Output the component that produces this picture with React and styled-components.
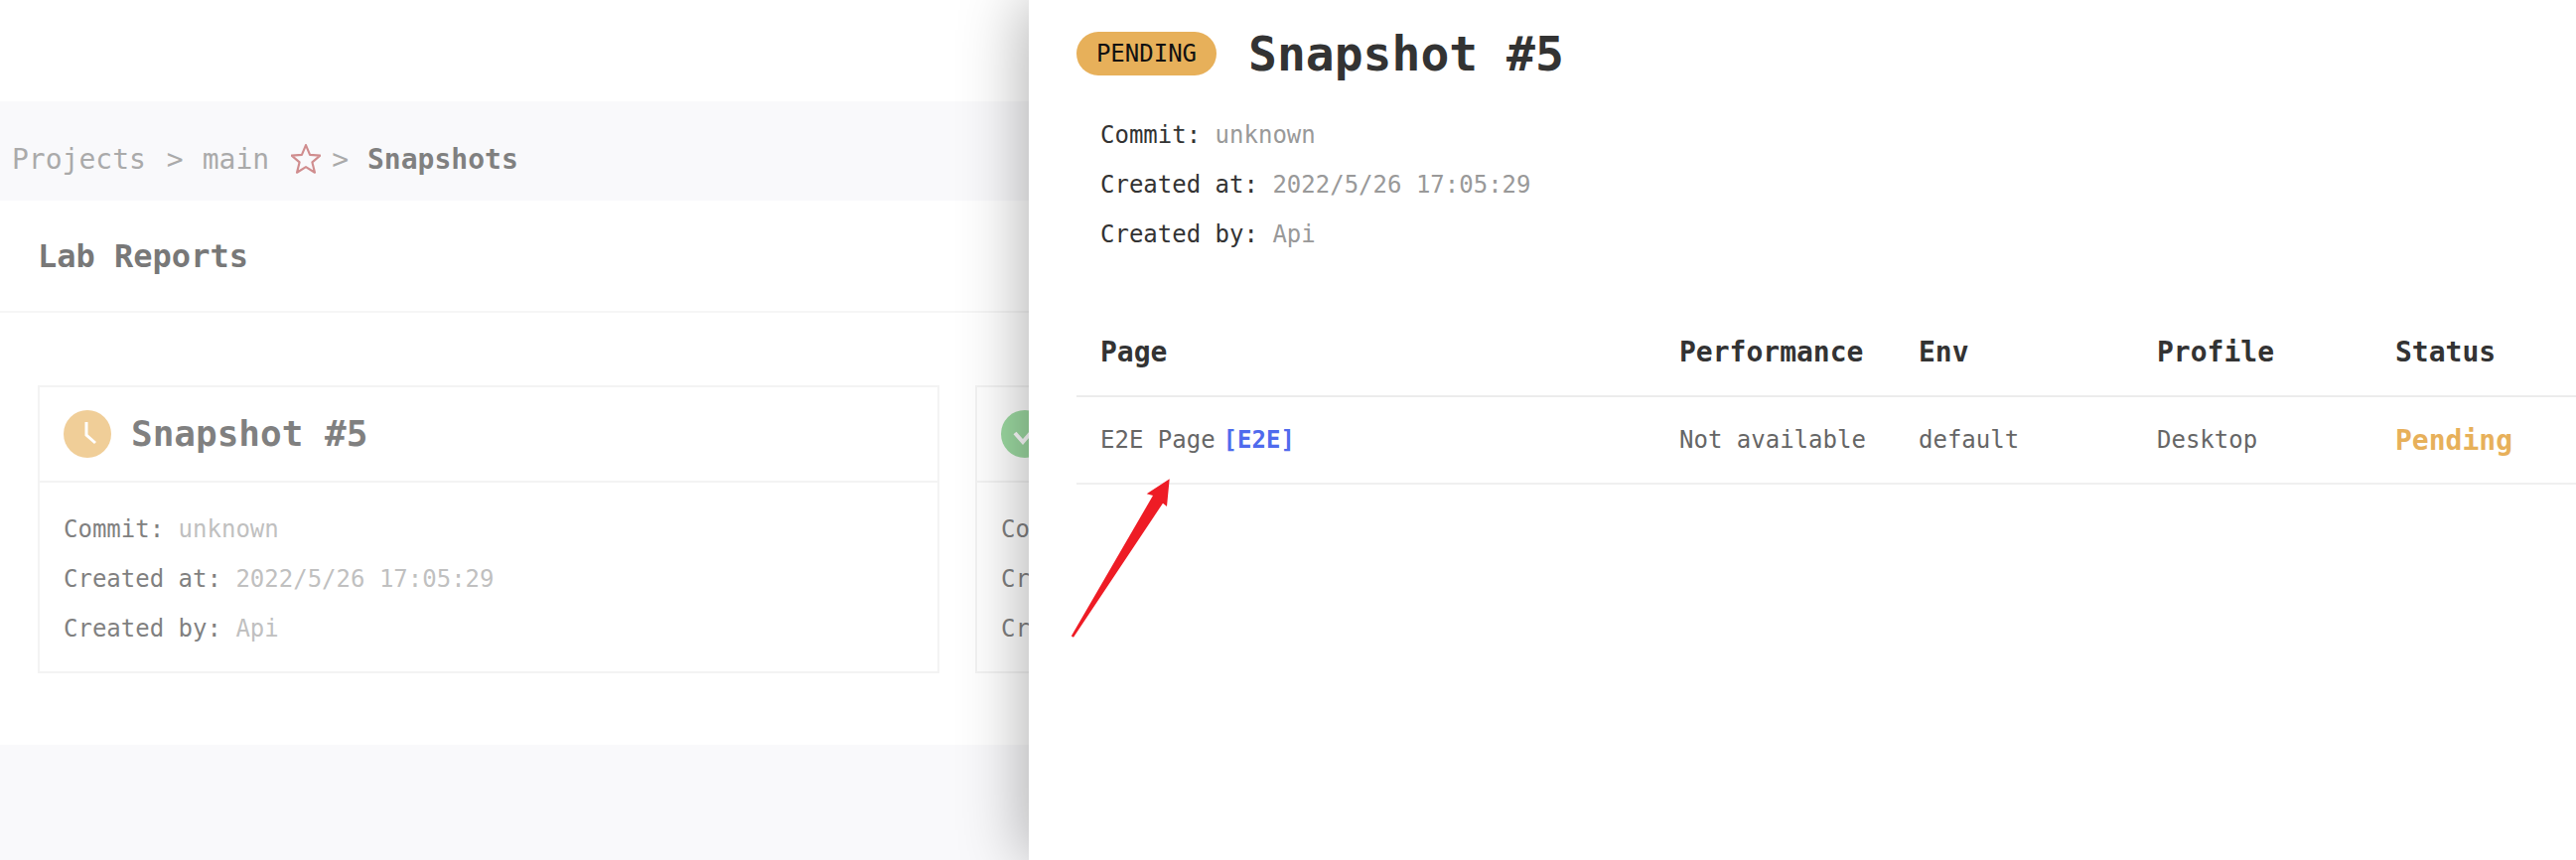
import React from 'react';
import styled, {createGlobalStyle} from 'styled-components';

const GlobalStyle = createGlobalStyle`
    html, body {
        margin: 0;
        padding: 0;
        background: #fff;
    }
    body {
        font-family: 'DejaVu Sans Mono', 'Liberation Mono', monospace;
        color: #333;
    }
`;

const snapshotMeta = [
    {label: 'Commit:', value: 'unknown'},
    {label: 'Created at:', value: '2022/5/26 17:05:29'},
    {label: 'Created by:', value: 'Api'},
];

const columns = '583px 241px 240px 240px 1fr';

function MetaLines({items}) {
    return (
        <div>
            {items.map((item) => (
                <MetaLine key={item.label}>
                    {item.label} <MetaValue>{item.value}</MetaValue>
                </MetaLine>
            ))}
        </div>
    );
}

function App() {
    return (
        <Page>
            <GlobalStyle />

            <TopBar />
            <Breadcrumb>
                <Crumb>Projects</Crumb>
                <Separator>&gt;</Separator>
                <Crumb>main</Crumb>
                <StarIcon viewBox="1 1 28 28">
                    <path
                        d="M15 2 L18.8 11.2 L28.4 11.9 L21 18.2 L23.4 27.8 L15 22.6 L6.6 27.8 L9 18.2 L1.6 11.9 L11.2 11.2 Z"
                        fill="none"
                        stroke="#b3484a"
                        strokeWidth="2"
                        strokeLinejoin="round"
                    />
                </StarIcon>
                <Separator $tight>&gt;</Separator>
                <CurrentCrumb>Snapshots</CurrentCrumb>
            </Breadcrumb>

            <Main>
                <SectionHeader>Lab Reports</SectionHeader>
                <CardGrid>
                    <Card>
                        <CardHeader>
                            <StatusIcon viewBox="0 0 48 48">
                                <circle cx="24" cy="24" r="24" fill="#e7b05a" />
                                <path d="M23 12 V25 L32 33" fill="none" stroke="#fff" strokeWidth="3" />
                            </StatusIcon>
                            <CardTitle>Snapshot #5</CardTitle>
                        </CardHeader>
                        <CardBody>
                            <MetaLines items={snapshotMeta} />
                        </CardBody>
                    </Card>
                    <Card>
                        <CardHeader>
                            <StatusIcon viewBox="0 0 48 48">
                                <circle cx="24" cy="24" r="24" fill="#62c369" />
                                <path d="M14 23 L22 32 L35 17" fill="none" stroke="#fff" strokeWidth="4" />
                            </StatusIcon>
                        </CardHeader>
                        <CardBody>
                            <MetaLines items={snapshotMeta} />
                        </CardBody>
                    </Card>
                </CardGrid>
            </Main>
            <Footer />

            <Mask />

            <Drawer>
                <DrawerHeader>
                    <Badge>PENDING</Badge>
                    <DrawerTitle>Snapshot #5</DrawerTitle>
                </DrawerHeader>
                <DrawerMeta>
                    <MetaLines items={snapshotMeta} />
                </DrawerMeta>

                <Table>
                    <HeadRow>
                        <HeadCell>Page</HeadCell>
                        <HeadCell>Performance</HeadCell>
                        <HeadCell>Env</HeadCell>
                        <HeadCell>Profile</HeadCell>
                        <HeadCell>Status</HeadCell>
                    </HeadRow>
                    <BodyRow>
                        <BodyCell>
                            E2E Page<PageTag>[E2E]</PageTag>
                        </BodyCell>
                        <BodyCell>Not available</BodyCell>
                        <BodyCell>default</BodyCell>
                        <BodyCell>Desktop</BodyCell>
                        <StatusCell>Pending</StatusCell>
                    </BodyRow>
                </Table>
            </Drawer>

            <Arrow viewBox="0 0 110 170">
                <polygon
                    points="102.7,4.3 79.7,19.3 86,21 3.8,162.5 6,163.8 96,28.7 100,32"
                    fill="#ee1c25"
                />
            </Arrow>
        </Page>
    );
}

export default App;

const Page = styled.div`
    position: relative;
    width: 100%;
    height: 866px;
    overflow: hidden;
    background: #fff;
`;

const TopBar = styled.div`
    height: 102px;
    background: #fff;
`;

const Breadcrumb = styled.div`
    box-sizing: border-box;
    display: flex;
    align-items: center;
    height: 100px;
    padding: 16px 0 0 12px;
    background: #f5f5f8;
    font-size: 28px;
    color: #777;
`;

const Crumb = styled.span`
    color: #777;
`;

const CurrentCrumb = styled.span`
    color: #333;
    font-weight: 700;
`;

const Separator = styled.span`
    margin: ${(props) => (props.$tight ? '0 19px 0 11px' : '0 19px 0 21px')};
    color: #777;
`;

const StarIcon = styled.svg`
    width: 30px;
    height: 30px;
    margin-left: 22px;
`;

const Main = styled.div`
    height: 548px;
    background: #fff;
`;

const SectionHeader = styled.div`
    display: flex;
    align-items: center;
    height: 111px;
    padding-left: 38px;
    border-bottom: 2px solid #f0f0f0;
    font-size: 32px;
    font-weight: 700;
    color: #262626;
`;

const CardGrid = styled.div`
    display: grid;
    grid-template-columns: 908px 908px;
    gap: 36px;
    padding: 73px 0 0 38px;
`;

const Card = styled.div`
    box-sizing: border-box;
    height: 290px;
    border: 2px solid #ececec;
`;

const CardHeader = styled.div`
    display: flex;
    align-items: center;
    gap: 20px;
    box-sizing: border-box;
    height: 96px;
    padding-left: 24px;
    border-bottom: 2px solid #ececec;
`;

const StatusIcon = styled.svg`
    width: 48px;
    height: 48px;
    flex: none;
`;

const CardTitle = styled.div`
    padding-bottom: 2px;
    font-size: 36px;
    font-weight: 700;
    color: #333;
`;

const CardBody = styled.div`
    padding: 22px 0 0 24px;
`;

const MetaLine = styled.div`
    height: 50px;
    line-height: 50px;
    font-size: 24px;
    color: #333;
    white-space: pre;
`;

const MetaValue = styled.span`
    color: #999;
`;

const Footer = styled.div`
    height: 116px;
    background: #f5f5f8;
`;

const Mask = styled.div`
    position: absolute;
    inset: 0;
    background: rgba(255, 255, 255, 0.38);
`;

const Drawer = styled.div`
    position: absolute;
    top: 0;
    right: 0;
    bottom: 0;
    width: 1558px;
    background: #fff;
    box-shadow: -6px 0 60px rgba(0, 0, 0, 0.3);
`;

const DrawerHeader = styled.div`
    display: flex;
    align-items: center;
    gap: 32px;
    padding: 32px 0 0 48px;
`;

const Badge = styled.div`
    box-sizing: border-box;
    display: flex;
    align-items: center;
    justify-content: center;
    width: 141px;
    height: 44px;
    border-radius: 22px;
    background: #e7b05a;
    font-size: 24px;
    color: #111;
`;

const DrawerTitle = styled.div`
    font-size: 48px;
    font-weight: 700;
    line-height: 44px;
    color: #333;
`;

const DrawerMeta = styled.div`
    padding: 35px 0 0 72px;
`;

const Table = styled.div`
    margin: 46px 0 0 48px;
`;

const HeadRow = styled.div`
    display: grid;
    grid-template-columns: ${columns};
    align-items: center;
    height: 91px;
    border-bottom: 2px solid #ececec;
`;

const BodyRow = styled.div`
    display: grid;
    grid-template-columns: ${columns};
    align-items: center;
    height: 86px;
    border-bottom: 2px solid #f0f0f0;
`;

const HeadCell = styled.div`
    padding: 3px 0 0 24px;
    font-size: 28px;
    font-weight: 700;
    color: #333;
`;

const BodyCell = styled.div`
    padding-left: 24px;
    font-size: 24px;
    color: #666;
`;

const StatusCell = styled.div`
    padding-left: 24px;
    font-size: 28px;
    font-weight: 700;
    color: #e7b05a;
`;

const PageTag = styled.span`
    margin-left: 8px;
    font-weight: 700;
    color: #4f6bed;
`;

const Arrow = styled.svg`
    position: absolute;
    left: 1075px;
    top: 478px;
    width: 110px;
    height: 170px;
`;
